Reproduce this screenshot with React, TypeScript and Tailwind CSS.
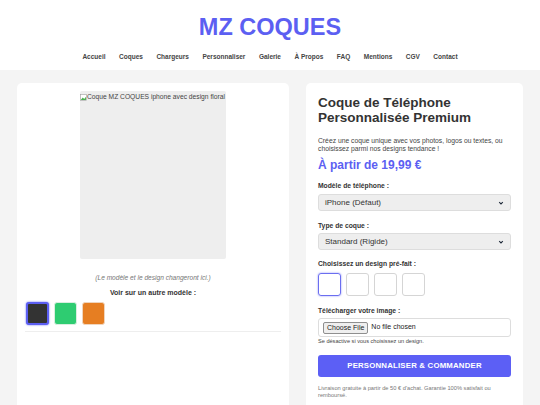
import React from 'react';

const navItems = ['Accueil', 'Coques', 'Chargeurs', 'Personnaliser', 'Galerie', 'À Propos', 'FAQ', 'Mentions', 'CGV', 'Contact'];

const Chevron = () => (
    <svg width="6" height="6" viewBox="0 0 10 10" className="text-gray-800">
        <path d="M2 3.5 L5 6.5 L8 3.5" fill="none" stroke="currentColor" strokeWidth="1.8" />
    </svg>
);

export default function App() {
    return (
        <div className="min-h-screen bg-[#f4f4f4] flex flex-col font-['Liberation_Sans',Arial,sans-serif] text-[#333]">
            {/* Header */}
            <div className="bg-white h-[70px] flex flex-col items-center">
                <h1 className="text-[23.5px] leading-[28px] font-bold text-[#5c5ff2] mt-[13px]">MZ COQUES</h1>
                <nav className="flex gap-[13.5px] mt-[12px] text-[6.5px] leading-[8px] font-bold text-[#444]">
                    {navItems.map((item) => (
                        <span key={item}>{item}</span>
                    ))}
                </nav>
            </div>

            <div className="grid grid-cols-[272px_217px] gap-[17px] px-[17px] pt-[13px] flex-1">
                {/* Left card */}
                <div className="bg-white rounded-t-[5px] px-[8px] pt-[8px]">
                    <div className="w-[146px] h-[168px] mx-auto bg-[#eeeeee] rounded-[2px] overflow-hidden">
                        <div className="flex items-center text-[6.7px] text-[#444] leading-[10px] pt-[1px]">
                            <svg width="7" height="7" viewBox="0 0 10 10" className="shrink-0">
                                <rect x="0.5" y="0.5" width="9" height="9" fill="#fff" stroke="#999" strokeWidth="0.8" />
                                <path d="M1.5 8 L4 5 L6 7 L8.5 4 V8.5 H1.5 Z" fill="#4caf50" />
                            </svg>
                            <span className="whitespace-nowrap">Coque MZ COQUES iphone avec design floral</span>
                        </div>
                    </div>
                    <p className="text-center italic text-[6.6px] leading-[8px] text-[#777] mt-[15px]">(Le modèle et le design changeront ici.)</p>
                    <p className="text-center font-bold text-[7px] leading-[8px] text-[#333] mt-[7px]">Voir sur un autre modèle :</p>
                    <div className="flex gap-[5px] mt-[5px] pl-[1px]">
                        <div className="w-[23px] h-[23px] rounded-[3px] bg-[#333333] border-[2px] border-[#5c5ff2] shadow-[0_0_2px_#5c5ff2]" />
                        <div className="w-[23px] h-[23px] rounded-[3px] bg-[#2ecc71] border border-[#d9eee0]" />
                        <div className="w-[23px] h-[23px] rounded-[3px] bg-[#e67e22] border border-[#f0d5bd]" />
                    </div>
                    <div className="border-t border-[#eeeeee] mt-[6px]" />
                </div>

                {/* Right card */}
                <div className="bg-white rounded-t-[5px] px-[12px] pt-[12px]">
                    <h2 className="text-[13.5px] leading-[15px] font-bold text-[#333]">Coque de Téléphone Personnalisée Premium</h2>
                    <p className="text-[6.75px] leading-[8px] text-[#444] mt-[12px]">Créez une coque unique avec vos photos, logos ou textes, ou choisissez parmi nos designs tendance !</p>
                    <p className="text-[12px] font-bold text-[#5c5ff2] mt-[4px] leading-[16px]">À partir de 19,99 €</p>

                    <p className="text-[6.75px] leading-[8px] font-bold text-[#333] mt-[9px]">Modèle de téléphone :</p>
                    <div className="mt-[4px] h-[17px] bg-[#eeeeee] border border-[#dddddd] rounded-[3px] flex items-center justify-between px-[6px] text-[8px] text-[#333]">
                        <span>iPhone (Défaut)</span>
                        <Chevron />
                    </div>

                    <p className="text-[6.75px] leading-[8px] font-bold text-[#333] mt-[11px]">Type de coque :</p>
                    <div className="mt-[3px] h-[17px] bg-[#eeeeee] border border-[#dddddd] rounded-[3px] flex items-center justify-between px-[6px] text-[8px] text-[#333]">
                        <span>Standard (Rigide)</span>
                        <Chevron />
                    </div>

                    <p className="text-[6.75px] leading-[8px] font-bold text-[#333] mt-[10px]">Choisissez un design pré-fait :</p>
                    <div className="flex gap-[5px] mt-[5px]">
                        <div className="w-[23px] h-[23px] rounded-[3px] border-[1.5px] border-[#6b6ef0] shadow-[0_0_2px_#8a8cf5]" />
                        <div className="w-[23px] h-[23px] rounded-[3px] border-[1.5px] border-[#d5d5d5]" />
                        <div className="w-[23px] h-[23px] rounded-[3px] border-[1.5px] border-[#d5d5d5]" />
                        <div className="w-[23px] h-[23px] rounded-[3px] border-[1.5px] border-[#d5d5d5]" />
                    </div>

                    <p className="text-[6.75px] leading-[8px] font-bold text-[#333] mt-[11px]">Télécharger votre image :</p>
                    <div className="mt-[3px] h-[19px] bg-white border border-[#dddddd] rounded-[3px] flex items-center px-[4px] gap-[3px] text-[7px] text-[#222]">
                        <span className="bg-[#efefef] border border-[#8f8f8f] rounded-[2px] px-[3px] leading-[10px]">Choose File</span>
                        <span>No file chosen</span>
                    </div>
                    <p className="text-[5.6px] leading-[7px] text-[#444] mt-[0.5px]">Se désactive si vous choisissez un design.</p>

                    <button className="mt-[10.5px] w-full h-[22px] bg-[#5c5ff5] rounded-[3px] text-white font-bold text-[7.8px] tracking-[0.2px]">PERSONNALISER &amp; COMMANDER</button>

                    <p className="text-[5.7px] leading-[7px] text-[#777] mt-[8px]">Livraison gratuite à partir de 50 € d'achat. Garantie 100% satisfait ou remboursé.</p>
                </div>
            </div>
        </div>
    );
}
